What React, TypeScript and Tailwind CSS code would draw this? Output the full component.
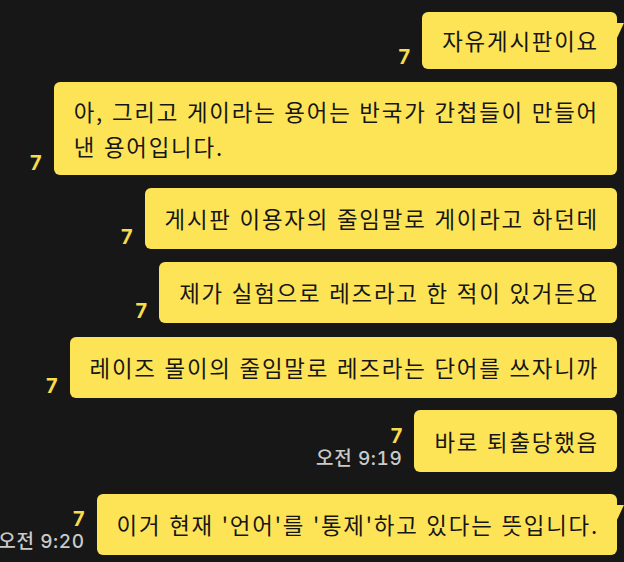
import React from 'react';

type Message = {
  lines: string[];
  tail?: boolean;
  time?: string;
  pad: string;
  gap: string;
};

const messages: Message[] = [
  { lines: ['자유게시판이요'], tail: true, pad: 'py-[11px]', gap: 'mt-0' },
  {
    lines: ['아, 그리고 게이라는 용어는 반국가 간첩들이 만들어', '낸 용어입니다.'],
    pad: 'py-[11.5px]',
    gap: 'mt-[13px]',
  },
  { lines: ['게시판 이용자의 줄임말로 게이라고 하던데'], pad: 'py-[13px]', gap: 'mt-[13px]' },
  { lines: ['제가 실험으로 레즈라고 한 적이 있거든요'], pad: 'py-[13px]', gap: 'mt-[13px]' },
  { lines: ['레이즈 몰이의 줄임말로 레즈라는 단어를 쓰자니까'], pad: 'py-[13px]', gap: 'mt-[14px]' },
  { lines: ['바로 퇴출당했음'], time: '오전 9:19', pad: 'py-[13.5px]', gap: 'mt-[12px]' },
  {
    lines: ["이거 현재 '언어'를 '통제'하고 있다는 뜻입니다."],
    tail: true,
    time: '오전 9:20',
    pad: 'py-[13px]',
    gap: 'mt-[22px]',
  },
];

function Bubble({ msg }: { msg: Message }) {
  return (
    <div className={`relative shrink-0 rounded-md bg-[#fde456] pl-5 pr-[18px] ${msg.pad}`}>
      {msg.tail && (
        <svg
          className="absolute -right-[7px] top-[11px]"
          width="8"
          height="17"
          viewBox="0 0 8 17"
        >
          <polygon points="0,0 8,0 0,17" fill="#fde456" />
        </svg>
      )}
      <p className="whitespace-nowrap text-[22.4px] leading-[35px] tracking-[1.8px] text-[#161616] [word-spacing:1px]">
        {msg.lines.map((line, i) => (
          <React.Fragment key={i}>
            {i > 0 && <br />}
            {line}
          </React.Fragment>
        ))}
      </p>
    </div>
  );
}

export default function App() {
  return (
    <div
      className="flex h-[562px] w-[624px] flex-col overflow-hidden bg-[#171717] pr-[7px] pt-[12px]"
      style={{ fontFamily: '"Noto Sans CJK KR", "Noto Sans", sans-serif' }}
    >
      {messages.map((msg, i) => (
        <div key={i} className={`flex items-end justify-end gap-3 ${msg.gap}`}>
          <div className="flex shrink-0 flex-col items-end pb-[1px]">
            <span className="font-['Inter'] text-[20px] font-bold leading-[22px] text-[#f7dc4c]">7</span>
            {msg.time && (
              <span className="whitespace-nowrap font-['Inter','Noto_Sans_CJK_KR',sans-serif] text-[19px] font-medium leading-[24px] tracking-[0.6px] text-[#cacaca] tabular-nums">
                {msg.time}
              </span>
            )}
          </div>
          <Bubble msg={msg} />
        </div>
      ))}
    </div>
  );
}
